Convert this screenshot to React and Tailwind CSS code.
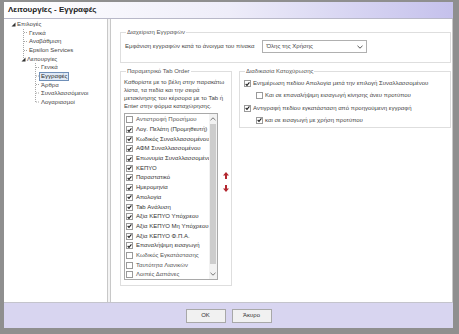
import React from "react";

const treeItems = [
  { label: "Επιλογές", x: 17, arrow: 11 },
  { label: "Γενικά", x: 29 },
  { label: "Αναβάθμιση", x: 29 },
  { label: "Epsilon Services", x: 29 },
  { label: "Λειτουργίες", x: 27, arrow: 21 },
  { label: "Γενικά", x: 41 },
  { label: "Εγγραφές", x: 41, selected: true },
  { label: "Άρθρα", x: 41 },
  { label: "Συναλλασσόμενοι", x: 41 },
  { label: "Λογαριασμοί", x: 41 },
];

const tabFields = [
  { label: "Αντιστροφή Προσήμου", checked: false },
  { label: "Λογ. Πελάτη (Προμηθευτή)", checked: true },
  { label: "Κωδικός Συναλλασσομένου", checked: true },
  { label: "ΑΦΜ Συναλλασσομένου", checked: true },
  { label: "Επωνυμία Συναλλασσομένου", checked: true },
  { label: "ΚΕΠΥΟ", checked: true },
  { label: "Παραστατικό", checked: true },
  { label: "Ημερομηνία", checked: true },
  { label: "Απολογία", checked: true },
  { label: "Tab Ανάλυση", checked: true },
  { label: "Αξία ΚΕΠΥΟ Υπόχρεου", checked: true },
  { label: "Αξία ΚΕΠΥΟ Μη Υπόχρεου", checked: true },
  { label: "Αξία ΚΕΠΥΟ Φ.Π.Α.", checked: true },
  { label: "Επαναλήψιμη εισαγωγή", checked: true },
  { label: "Κωδικός Εγκατάστασης", checked: false },
  { label: "Ταυτότητα Λιανικών", checked: false },
  { label: "Λοιπές Δαπάνες", checked: false },
];

function Check({ checked }) {
  return (
    <span className="w-[7px] h-[7px] shrink-0 border border-[#9a9a9a] bg-white flex items-center justify-center">
      {checked && (
        <svg width="6" height="6" viewBox="0 0 6 6">
          <path d="M0.8 3 L2.4 4.6 L5.3 1" stroke="#222" strokeWidth="1.3" fill="none" />
        </svg>
      )}
    </span>
  );
}

function Group({ title, className, children }) {
  return (
    <fieldset className={`border border-[#dedede] px-[3px] ${className}`}>
      <legend className="ml-[2px] px-[1px] leading-[7px] text-[#555]">{title}</legend>
      {children}
    </fieldset>
  );
}

export default function App() {
  return (
    <div className="w-[459px] h-[334px] bg-[#8f8f8f] pt-[2px] pl-[4px] pr-[6px] pb-[6px] flex flex-col font-['Liberation_Sans',sans-serif] text-[6px] text-[#444]">
      <div className="h-[17px] shrink-0 bg-gradient-to-r from-white via-[#eeedf9] to-[#c5c1ec] border-b border-[#b8b8c8] flex items-center pl-[4px]">
        <span className="text-[8px] font-bold text-[#222]">Λειτουργίες - Εγγραφές</span>
      </div>

      <div className="flex-1 flex bg-white min-h-0">
        <div className="relative w-[104px] border-r border-[#c8c8c8] pt-[1px]">
          <svg className="absolute left-0 top-0" width="104" height="110">
            <g stroke="#a8a8a8" strokeDasharray="1 1" strokeWidth="1">
              <line x1="19.5" y1="10" x2="19.5" y2="40" />
              <line x1="20" y1="13.5" x2="24" y2="13.5" />
              <line x1="20" y1="22.5" x2="24" y2="22.5" />
              <line x1="20" y1="31.5" x2="24" y2="31.5" />
              <line x1="31.5" y1="44" x2="31.5" y2="83" />
              <line x1="32" y1="48.5" x2="36" y2="48.5" />
              <line x1="32" y1="57" x2="36" y2="57" />
              <line x1="32" y1="65.5" x2="36" y2="65.5" />
              <line x1="32" y1="74" x2="36" y2="74" />
              <line x1="32" y1="83" x2="36" y2="83" />
            </g>
          </svg>
          {treeItems.map((item, i) => (
            <div key={i} className="relative h-[8.7px] flex items-center">
              {item.arrow !== undefined && (
                <svg className="absolute" style={{ left: item.arrow - 4 }} width="5" height="5" viewBox="0 0 5 5">
                  <path d="M4.5 0.5 L4.5 4.5 L0.5 4.5 Z" fill="#333" />
                </svg>
              )}
              <span
                style={{ marginLeft: item.x - 6 }}
                className={
                  item.selected
                    ? "px-[1px] border border-[#6f8fb8] bg-[#dfe9f6] leading-[7px] text-[#2a2a2a]"
                    : "leading-[7px] px-[2px]"
                }
              >
                {item.label}
              </span>
            </div>
          ))}
        </div>
        <div className="w-[3px] border-r border-[#c8c8c8] bg-[#f4f4f4]" />

        <div className="flex-1 flex flex-col pl-[9px] pr-[1px] pt-[10px] border-r border-[#c8c8c8]">
          <Group title="Διαχείριση Εγγραφών" className="h-[34px]">
            <div className="flex items-center mt-[4px] pl-[1px]">
              <span className="whitespace-nowrap">Εμφάνιση εγγραφών κατά το άνοιγμα του πίνακα</span>
              <div className="ml-[8px] w-[105px] h-[13px] border border-[#b0b0b0] bg-white flex items-center justify-between px-[3px]">
                <span>Όλης της Χρήσης</span>
                <svg width="6" height="4" viewBox="0 0 6 4">
                  <path d="M0.5 0.8 L3 3.2 L5.5 0.8" stroke="#555" fill="none" strokeWidth="1" />
                </svg>
              </div>
            </div>
          </Group>

          <div className="flex gap-[7px] mt-[5px]">
            <Group title="Παραμετρικό Tab Order" className="w-[112px] h-[218px]">
              <div className="leading-[8px] mt-[3px] whitespace-nowrap">
                <div>Καθορίστε με το βέλη στην παρακάτω</div>
                <div>λίστα, τα πεδία και την σειρά</div>
                <div>μετακίνησης του κέρσορα με το Tab ή</div>
                <div>Enter στην φόρμα καταχώρησης.</div>
              </div>
              <div className="relative">
                <div className="mt-[3px] w-[94px] h-[167px] border border-[#a9a9a9] flex">
                  <div className="flex-1 pt-[1px] pl-[1px] overflow-hidden">
                    {tabFields.map((f, i) => (
                      <div key={i} className="h-[9.7px] flex items-center gap-[3px] whitespace-nowrap">
                        <Check checked={f.checked} />
                        <span className={f.checked ? "text-[#333]" : "text-[#555]"}>{f.label}</span>
                      </div>
                    ))}
                  </div>
                  <div className="w-[8px] bg-[#f2f2f2] flex flex-col items-center">
                    <svg className="mt-[3px]" width="6" height="4" viewBox="0 0 6 4">
                      <path d="M0.5 3.2 L3 0.8 L5.5 3.2" stroke="#777" fill="none" strokeWidth="1" />
                    </svg>
                    <div className="mt-[3px] w-[6px] h-[140px] bg-[#cdcdcd]" />
                    <svg className="mt-auto mb-[3px]" width="6" height="4" viewBox="0 0 6 4">
                      <path d="M0.5 0.8 L3 3.2 L5.5 0.8" stroke="#777" fill="none" strokeWidth="1" />
                    </svg>
                  </div>
                </div>
                <div className="absolute left-[99px] top-[59px] flex flex-col gap-[6px]">
                  <svg width="6" height="7" viewBox="0 0 6 7">
                    <path d="M3 0 L6 3.5 L4 3.5 L4 7 L2 7 L2 3.5 L0 3.5 Z" fill="#b3262e" />
                  </svg>
                  <svg width="6" height="7" viewBox="0 0 6 7">
                    <path d="M3 7 L6 3.5 L4 3.5 L4 0 L2 0 L2 3.5 L0 3.5 Z" fill="#b3262e" />
                  </svg>
                </div>
              </div>
            </Group>

            <Group title="Διαδικασία Κατοχύρωσης" className="flex-1 h-[60px]">
              <div className="flex flex-col gap-[3.3px] mt-[4px] pl-[1px] whitespace-nowrap">
                <div className="flex items-center gap-[2px]">
                  <Check checked />
                  <span>Ενημέρωση πεδίου Απολογία μετά την επιλογή Συναλλασσομένου</span>
                </div>
                <div className="flex items-center gap-[2px] pl-[12px]">
                  <Check checked={false} />
                  <span>Και σε επαναλήψιμη εισαγωγή κίνησης άνευ προτύπου</span>
                </div>
                <div className="flex items-center gap-[2px]">
                  <Check checked />
                  <span>Αντιγραφή πεδίου εγκατάσταση από προηγούμενη εγγραφή</span>
                </div>
                <div className="flex items-center gap-[2px] pl-[12px]">
                  <Check checked />
                  <span>και σε εισαγωγή με χρήση προτύπου</span>
                </div>
              </div>
            </Group>
          </div>
        </div>
      </div>

      <div className="h-[26px] shrink-0 bg-[#d8d5f0] border-t border-[#c4c4cc] flex items-center justify-center gap-[6px]">
        <button className="w-[40px] h-[14px] bg-[#f1f1f1] border border-[#a8a8a8] text-[#333]">OK</button>
        <button className="w-[40px] h-[14px] bg-[#f1f1f1] border border-[#a8a8a8] text-[#333]">Άκυρο</button>
      </div>
    </div>
  );
}
